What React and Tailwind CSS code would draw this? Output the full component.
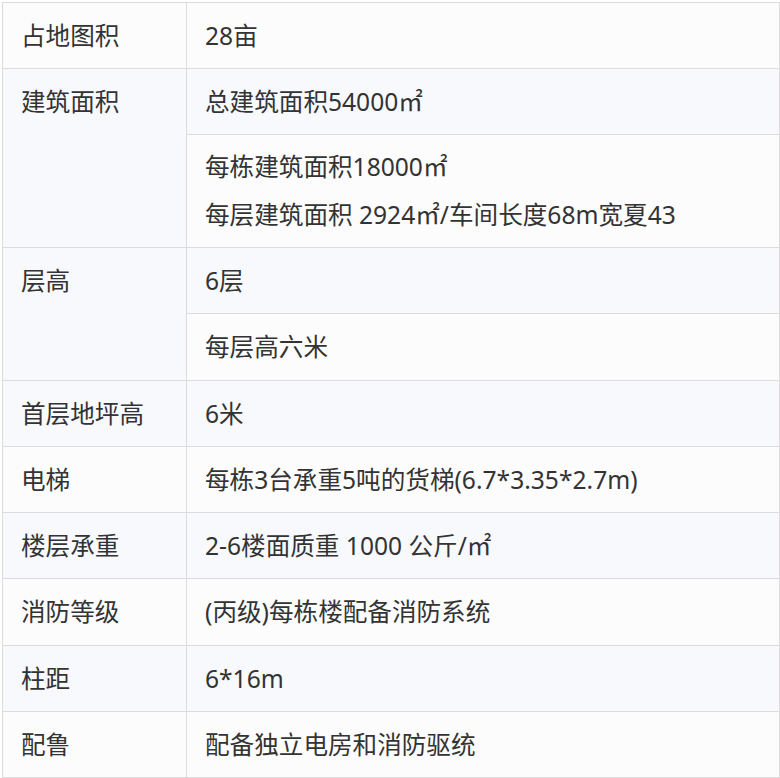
import React from "react";

const rows = [
  { label: "占地图积", cells: [["28亩"]] },
  { label: "建筑面积", cells: [["总建筑面积54000㎡"], ["每栋建筑面积18000㎡", "每层建筑面积 2924㎡/车间长度68m宽夏43"]] },
  { label: "层高", cells: [["6层"], ["每层高六米"]] },
  { label: "首层地坪高", cells: [["6米"]] },
  { label: "电梯", cells: [["每栋3台承重5吨的货梯(6.7*3.35*2.7m)"]] },
  { label: "楼层承重", cells: [["2-6楼面质重 1000 公斤/㎡"]] },
  { label: "消防等级", cells: [["(丙级)每栋楼配备消防系统"]] },
  { label: "柱距", cells: [["6*16m"]] },
  { label: "配鲁", cells: [["配备独立电房和消防驱统"]] },
];

const App = () => {
  let trIndex = 0;
  const body = [];

  rows.forEach((row, i) => {
    row.cells.forEach((lines, j) => {
      const striped = trIndex % 2 === 1 ? "bg-[#f8f9fd]" : "bg-[#fcfcfc]";
      const multi = lines.length > 1;
      // first two rows sit on whole pixels, the rest drift a little in the shot
      const lead = trIndex < 2 ? "leading-[25px]" : "leading-[25.25px]";
      body.push(
        <tr key={`${i}-${j}`} className={striped}>
          {j === 0 && (
            <td
              rowSpan={row.cells.length}
              className={`border border-[#dcdcdc] px-[18px] py-[20px] align-top ${lead}`}
            >
              {row.label}
            </td>
          )}
          <td
            className={
              multi
                ? "border border-[#dcdcdc] px-[18px] py-[8px] align-top leading-[48px]"
                : `border border-[#dcdcdc] px-[18px] py-[20px] align-top ${lead}`
            }
          >
            {lines.map((line, k) => (
              <div key={k}>{line}</div>
            ))}
          </td>
        </tr>
      );
      trIndex++;
    });
  });

  return (
    <div className="bg-white w-[780px] h-[778px] pt-[2px] pl-[2px]">
      <table
        className="table-fixed border-collapse w-[778px] text-[24.6px] text-[#333333]"
        style={{ fontFamily: '"Noto Sans", "Noto Sans CJK SC", sans-serif' }}
      >
        <colgroup>
          <col className="w-[184px]" />
          <col />
        </colgroup>
        <tbody>{body}</tbody>
      </table>
    </div>
  );
};

export default App;
